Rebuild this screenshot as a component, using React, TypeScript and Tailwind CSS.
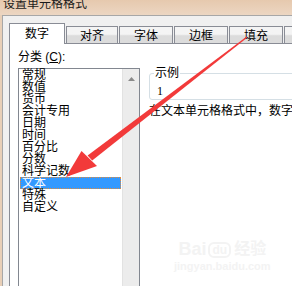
import React from "react";

const cjk = "font-['Liberation_Sans','Noto_Sans_CJK_SC',sans-serif]";

const categories = [
    "常规",
    "数值",
    "货币",
    "会计专用",
    "日期",
    "时间",
    "百分比",
    "分数",
    "科学记数",
    "文本",
    "特殊",
    "自定义",
];

const tabs = [
    { label: "对齐", w: "w-[52px]" },
    { label: "字体", w: "w-[54px]" },
    { label: "边框", w: "w-[54px]" },
    { label: "填充", w: "w-[54px]" },
    { label: "保护", w: "w-[60px]" },
];

export default function App() {
    return (
        <div
            className={`relative flex h-[286px] w-[292px] flex-col overflow-hidden bg-[#e8cfb7] text-[12px] leading-[12px] text-black ${cjk}`}
        >
            {/* title bar */}
            <div className="h-[15px] shrink-0 bg-linear-to-b from-[#e6c9ae] to-[#ecd6c2] pl-[3px]">
                <div className="-mt-[2px] whitespace-nowrap text-[#1a1a1a]">
                    设置单元格格式
                </div>
            </div>

            {/* dialog body */}
            <div className="ml-[2px] flex flex-1 flex-col border-l border-t border-[#a7a7a7] bg-[#f0f0f0] pl-[6px] pt-[7px]">
                <div className="flex h-[20px] items-end gap-px">
                    <div className="relative z-10 -mb-px flex h-[21px] w-[56px] shrink-0 items-center justify-center border-x border-t border-[#898c95] bg-white pb-[1px]">
                        数字
                    </div>
                    {tabs.map((t) => (
                        <div
                            key={t.label}
                            className={`flex h-[17px] ${t.w} shrink-0 items-center justify-center border-x border-t border-[#898c95] bg-linear-to-b from-[#f4f4f4] from-45% to-[#dcdcdc] to-55% pt-[1px]`}
                        >
                            {t.label}
                        </div>
                    ))}
                </div>

                {/* tab panel */}
                <div className="flex flex-1 border-l border-t border-[#898c95] bg-white pl-[8px] pt-[7px]">
                    {/* left column */}
                    <div className="flex w-[122px] shrink-0 flex-col">
                        <div className="whitespace-nowrap">
                            分类 (<span className="underline">C</span>):
                        </div>
                        <div className="mt-[5px] flex flex-1 border-l border-t border-r border-[#828790] bg-white">
                            <div className="flex w-[102px] flex-col pl-px">
                                {categories.map((c) =>
                                    c === "文本" ? (
                                        <div
                                            key={c}
                                            className="h-[12px] whitespace-nowrap bg-[#3399ff] pl-[2px] text-white outline-1 outline-dotted outline-[#e08a3c] -outline-offset-1"
                                        >
                                            {c}
                                        </div>
                                    ) : (
                                        <div
                                            key={c}
                                            className="h-[12px] whitespace-nowrap pl-[2px]"
                                        >
                                            {c}
                                        </div>
                                    )
                                )}
                            </div>
                            <div className="ml-auto flex w-[17px] flex-col items-center border-l border-[#e2e2e2] bg-[#ececec] pt-[8px]">
                                <svg width="7" height="4" viewBox="0 0 7 4">
                                    <path d="M3.5 0 L7 4 L0 4 Z" fill="#8a8a8a" />
                                </svg>
                            </div>
                        </div>
                    </div>

                    {/* right column */}
                    <div className="ml-[9px] flex flex-col pt-[16px]">
                        <div className="relative mt-[6px] h-[27px] w-[220px] rounded-[3px] border border-[#d5dfe5] pl-[7px] pt-[11px]">
                            <span className="absolute -top-[7px] left-[4px] bg-white px-px">
                                示例
                            </span>
                            <span className="font-['Liberation_Serif','Noto_Sans_CJK_SC',serif]">
                                1
                            </span>
                        </div>
                        <div className="mt-[5px] whitespace-nowrap">
                            在文本单元格格式中，数字作为文本处理。单元格显示的内容与输入的内容完全一致。
                        </div>
                    </div>
                </div>
            </div>

            {/* watermark */}
            <div className="pointer-events-none absolute left-[174px] top-[240px] flex flex-col items-center text-[#f3f3f3]">
                <div className="flex items-end font-['Liberation_Sans',sans-serif] text-[18px] font-bold leading-[18px]">
                    <span>Bai</span>
                    <span className="ml-[2px] rounded-[6px] border-2 border-[#f3f3f3] px-[2px] text-[12px] leading-[12px]">
                        du
                    </span>
                    <span className={`ml-[3px] text-[16px] leading-[18px] ${cjk}`}>
                        经验
                    </span>
                </div>
                <div className="mt-[3px] font-['Liberation_Sans',sans-serif] text-[11px] font-bold leading-[11px]">
                    jingyan.baidu.com
                </div>
            </div>

            {/* red arrow */}
            <svg
                className="pointer-events-none absolute left-0 top-0"
                width="292"
                height="286"
                viewBox="0 0 292 286"
            >
                <polygon
                    points="246.7,36.6 247.4,37.4 92.2,160.5 87.6,155.6"
                    fill="#f23a3a"
                />
                <polygon points="66,177 81.5,151 97,166" fill="#f23a3a" />
            </svg>
        </div>
    );
}
